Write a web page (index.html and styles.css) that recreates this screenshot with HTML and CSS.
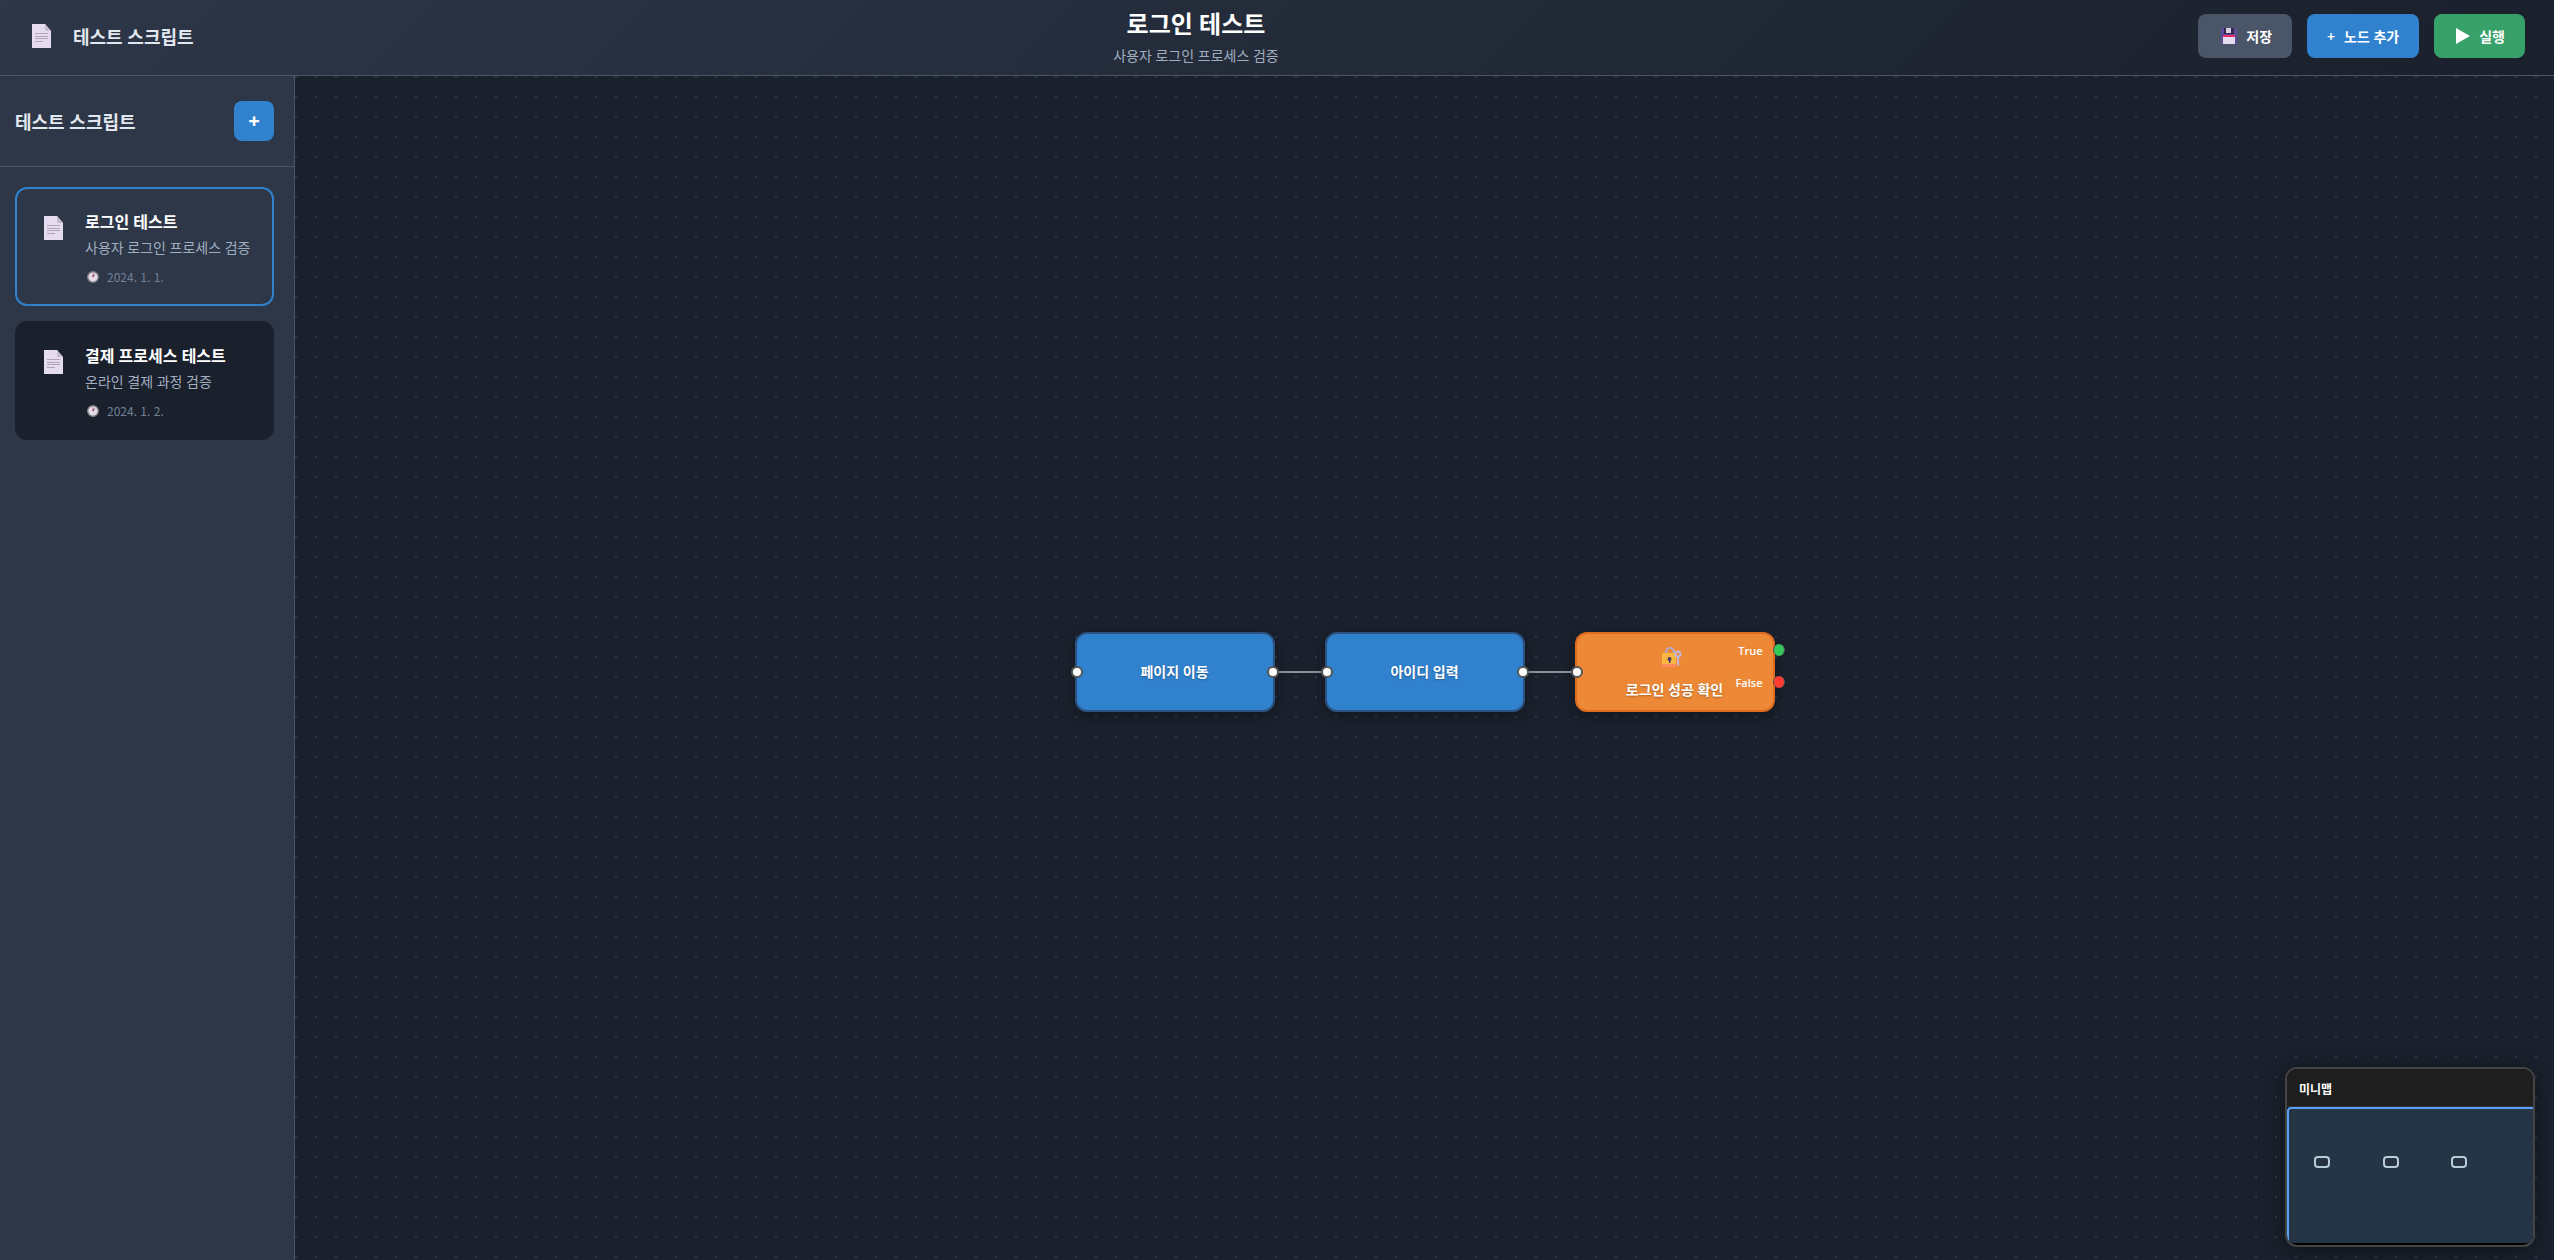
FILE: index.html
```html
<!DOCTYPE html>
<html lang="ko">
<head>
<meta charset="utf-8">
<title>로그인 테스트</title>
<link rel="stylesheet" href="styles.css">
</head>
<body>
<svg class="defs" aria-hidden="true">
  <symbol id="doc" viewBox="0 0 19 24">
    <path d="M0 0h13l6 7v17H0z" fill="#e6dcef"/>
    <path d="M13 0l6 7h-4.500q-1.500 0-1.500-1.500z" fill="#c5bccd"/>
    <path d="M3 9.500h13M3 12.500h13M3 14.500h13M3 17.500h8" stroke="#ada5b5" stroke-width="1"/>
  </symbol>
  <symbol id="clock" viewBox="0 0 12 12">
    <circle cx="6" cy="6" r="5.300" fill="#e4dfe6" stroke="#827d84" stroke-width="1.400"/>
    <path d="M6 6.300V2.500" stroke="#e0457b" stroke-width="1"/>
    <path d="M6 6l1.500-2.500" stroke="#443a4d" stroke-width="1"/>
  </symbol>
</svg>
<header class="topbar">
  <div class="brand">
    <svg class="doc-icon"><use href="#doc"/></svg>
    <span>테스트 스크립트</span>
  </div>
  <div class="heading">
    <h1>로그인 테스트</h1>
    <p>사용자 로그인 프로세스 검증</p>
  </div>
  <div class="actions">
    <button class="btn save">
      <svg class="save-icon" viewBox="0 0 16 16"><path d="M0 0h15l1 1v15H1l-1-1z" fill="#5b4b9b"/><path d="M3 0h10v6H3z" fill="#34264f"/><path d="M5 0h5v5H5z" fill="#d8cfe4"/><path d="M2 7h12v2H2z" fill="#e8286a"/><path d="M2 9h12v7H2z" fill="#e6dcef"/></svg>
      <span>저장</span>
    </button>
    <button class="btn add"><span>+</span><span>노드 추가</span></button>
    <button class="btn run">
      <svg class="play-icon" viewBox="0 0 14 16"><path d="M0 0l14 8-14 8z" fill="#fff"/></svg>
      <span>실행</span>
    </button>
  </div>
</header>
<div class="workspace">
  <aside class="sidebar">
    <div class="sidebar-head">
      <h2>테스트 스크립트</h2>
      <button class="new" aria-label="새 스크립트">+</button>
    </div>
    <ul class="scripts">
      <li class="card selected">
        <svg class="doc-icon"><use href="#doc"/></svg>
        <div>
          <h3>로그인 테스트</h3>
          <p>사용자 로그인 프로세스 검증</p>
          <div class="date"><svg class="clock-icon"><use href="#clock"/></svg><time datetime="2024-01-01">2024. 1. 1.</time></div>
        </div>
      </li>
      <li class="card">
        <svg class="doc-icon"><use href="#doc"/></svg>
        <div>
          <h3>결제 프로세스 테스트</h3>
          <p>온라인 결제 과정 검증</p>
          <div class="date"><svg class="clock-icon"><use href="#clock"/></svg><time datetime="2024-01-02">2024. 1. 2.</time></div>
        </div>
      </li>
    </ul>
  </aside>
  <main class="canvas">
    <div class="flow">
      <div class="node"><i class="port in"></i><span>페이지 이동</span><i class="port out"></i></div>
      <div class="edge"></div>
      <div class="node"><i class="port in"></i><span>아이디 입력</span><i class="port out"></i></div>
      <div class="edge"></div>
      <div class="node condition">
        <i class="port in"></i>
        <svg class="lock-icon" viewBox="0 0 20 20"><path d="M4 8V5a4 4 0 0 1 8 0v3" fill="none" stroke="#b5a9c9" stroke-width="2"/><rect y="6" width="14" height="14" rx="1" fill="#fcb643"/><path d="M0 17h14v2q0 1-1 1H1q-1 0-1-1z" fill="#ff8a5c"/><circle cx="7.500" cy="12" r="2" fill="#433b6b"/><path d="M7 12h1.500v4H7z" fill="#433b6b"/><circle cx="16" cy="7" r="2.500" fill="none" stroke="#c3b7d8" stroke-width="2"/><path d="M15 9h2v9l-1 1-1-1z" fill="#c3b7d8"/></svg>
        <span>로그인 성공 확인</span>
        <b class="branch yes">True</b><b class="branch no">False</b>
        <i class="port result yes"></i><i class="port result no"></i>
      </div>
    </div>
    <section class="minimap">
      <h4>미니맵</h4>
      <div class="map"><svg viewBox="0 0 244 134"><g fill="#26323f" stroke="#b8cbdc" stroke-width="2"><rect x="26" y="48" width="14" height="10" rx="3"/><rect x="95" y="48" width="14" height="10" rx="3"/><rect x="163" y="48" width="14" height="10" rx="3"/></g></svg></div>
    </section>
  </main>
</div>
</body>
</html>
```
FILE: styles.css
```css
* { box-sizing: border-box; }
body {
  margin: 0;
  min-height: 100vh;
  display: flex;
  flex-direction: column;
  background: #1a202c;
  color: #e2e8f0;
  font-family: "Noto Sans", "Noto Sans CJK KR", sans-serif;
  font-size: 14px;
}
h1, h2, h3, h4, p, ul { margin: 0; padding: 0; }
button { font: inherit; color: #fff; border: 0; }
.defs { position: absolute; width: 0; height: 0; }

.topbar {
  display: flex;
  justify-content: space-between;
  align-items: center;
  height: 76px;
  padding: 0 29px 3px 30px;
  background: linear-gradient(135deg, #2d3748, #1a202c);
  border-bottom: 1px solid #4a5568;
}
.brand { display: flex; align-items: center; gap: 22px; padding-left: 2px; font-size: 18px; font-weight: 600; }
.doc-icon { width: 19px; height: 24px; flex: none; }
.heading { text-align: center; }
.heading h1 { margin-bottom: 2px; font-size: 24px; line-height: 38px; color: #fff; }
.heading p { line-height: 22px; color: #a0aec0; }
.actions { display: flex; gap: 15px; }
.btn {
  display: flex;
  align-items: center;
  justify-content: center;
  gap: 9px;
  height: 44px;
  padding: 0 20px;
  border-radius: 8px;
  font-weight: 600;
}
.save { background: #4a5568; padding-left: 23px; }
.add { background: #3182ce; }
.run { background: #38a169; padding-left: 22px; }
.save-icon { width: 16px; height: 16px; }
.play-icon { width: 14px; height: 16px; }

.workspace { flex: 1; display: flex; }
.sidebar { width: 295px; background: #2d3748; border-right: 1px solid #4a5568; }
.sidebar-head {
  display: flex;
  justify-content: space-between;
  align-items: center;
  height: 91px;
  padding: 0 20px 0 15px;
  border-bottom: 1px solid #4a5568;
}
.sidebar-head h2 { font-size: 18px; font-weight: 600; }
.new { width: 40px; height: 40px; padding: 0; border-radius: 8px; background: #3182ce; font-size: 20px; line-height: 40px; font-weight: 800; }
.scripts { display: flex; flex-direction: column; gap: 15px; padding: 20px 20px 20px 15px; list-style: none; }
.card {
  display: flex;
  gap: 22px;
  padding: 20px 20px 18px 27px;
  border: 2px solid #1a202c;
  border-radius: 12px;
  background: #1a202c;
  white-space: nowrap;
}
.card.selected { background: #2d3748; border-color: #3182ce; }
.card .doc-icon { margin-top: 7px; }
.card h3 { font-size: 16px; line-height: 26px; font-weight: 600; color: #fff; }
.card p { line-height: 22px; margin: 2px 0 8px; color: #a0aec0; }
.date {
  display: flex;
  align-items: center;
  gap: 8px;
  padding-left: 2px;
  font-family: "Noto Sans CJK KR", sans-serif;
  font-size: 12px;
  line-height: 19px;
  color: #718096;
}
.clock-icon { width: 12px; height: 12px; }

.canvas {
  position: relative;
  flex: 1;
  display: flex;
  align-items: center;
  justify-content: center;
  padding-top: 8px;
  background: radial-gradient(circle at 1px 1px, #2d3748 1px, transparent 0) 0 0 / 20px 20px #1a202c;
}
.flow { display: flex; align-items: center; }
.node {
  position: relative;
  width: 200px;
  height: 80px;
  display: flex;
  flex-direction: column;
  align-items: center;
  justify-content: center;
  border: 2px solid #2c5282;
  border-radius: 12px;
  background: #3182ce;
  color: #fff;
  font-weight: 600;
  line-height: 22px;
  text-shadow: 0 1px 2px rgba(0, 0, 0, .3);
  box-shadow: 0 4px 12px rgba(0, 0, 0, .3);
}
.condition { gap: 12px; padding-top: 3px; background: #ed8936; border-color: #dd6b20; }
.lock-icon { width: 20px; height: 20px; margin-right: 6px; }
.edge { width: 50px; height: 2px; background: #8b909b; }
.port {
  position: absolute;
  top: 32px;
  z-index: 1;
  width: 12px;
  height: 12px;
  border: 2px solid #555;
  border-radius: 50%;
  background: #fff;
}
.in { left: -6px; }
.out { right: -6px; }
.result { right: -12px; border-width: 0 1px; }
.result.yes { top: 10px; background: #34c759; }
.result.no { top: 42px; background: #ff3b30; }
.branch {
  position: absolute;
  right: 10px;
  font-family: "Open Sans", sans-serif;
  font-size: 11px;
  font-weight: 600;
  line-height: 16px;
  text-shadow: none;
}
.branch.yes { top: 9px; }
.branch.no { top: 41px; }

.minimap {
  position: absolute;
  right: 19px;
  bottom: 13px;
  width: 250px;
  border: 2px solid #444;
  border-radius: 12px;
  overflow: hidden;
  background: #000;
  box-shadow: 0 4px 20px rgba(0, 0, 0, .4);
}
.minimap h4 { padding: 12px 12px 8px; font-size: 12px; line-height: 17px; color: #fff; background: #1e1e1e; border-bottom: 1px solid #333; }
.map { height: 136px; margin-bottom: 2px; border: solid #5a9ff5; border-width: 2px 0 0 2px; border-top-left-radius: 4px; background: #263545; }
.map svg { display: block; width: 244px; height: 134px; }
```
